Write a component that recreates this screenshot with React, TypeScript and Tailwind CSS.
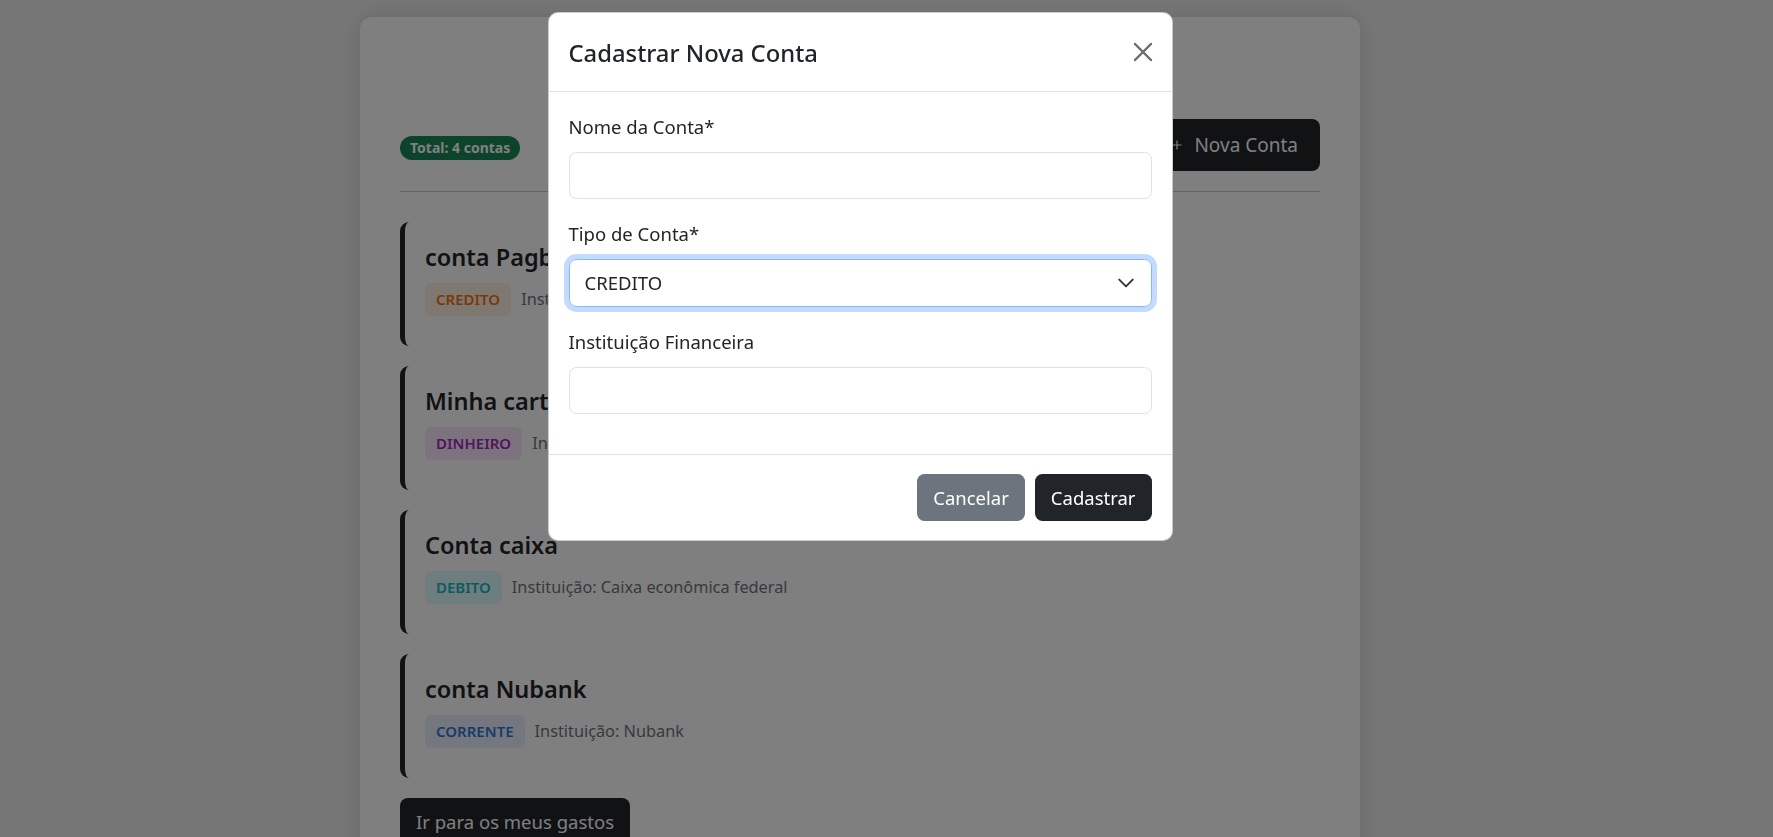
import { Plus } from "lucide-react";

type Conta = {
  nome: string;
  tipo: string;
  instituicao: string;
  badgeClass: string;
};

const contas: Conta[] = [
  {
    nome: "conta Pagbank",
    tipo: "CREDITO",
    instituicao: "Pagbank",
    badgeClass: "bg-[#fff0e2] text-[#f07410]",
  },
  {
    nome: "Minha carteira",
    tipo: "DINHEIRO",
    instituicao: "Carteira",
    badgeClass: "bg-[#fbe6ff] text-[#a02cb8]",
  },
  {
    nome: "Conta caixa",
    tipo: "DEBITO",
    instituicao: "Caixa econômica federal",
    badgeClass: "bg-[#dcfcff] text-[#18b4c0]",
  },
  {
    nome: "conta Nubank",
    tipo: "CORRENTE",
    instituicao: "Nubank",
    badgeClass: "bg-[#e8f0fc] text-[#2e78d8]",
  },
];

const ContaItem = ({ conta }: { conta: Conta }) => (
  <div className="bg-white border-l-[5px] border-[#212529] rounded-[9px] px-5 pt-5 pb-[30px]">
    <h5 className="text-[23.5px] leading-[30px] font-semibold text-[#212529] mb-[11px]">
      {conta.nome}
    </h5>
    <div className="flex items-center gap-2.5">
      <span
        className={`px-[11px] h-[33px] flex items-center rounded-[6px] text-[15px] font-semibold ${conta.badgeClass}`}
      >
        {conta.tipo}
      </span>
      <span className="text-[16.3px] text-[#6c757d]">
        Instituição: {conta.instituicao}
      </span>
    </div>
  </div>
);

const CloseIcon = () => (
  <svg viewBox="0 0 16 16" className="w-5 h-5" fill="none" stroke="currentColor">
    <path d="M1.5 1.5 14.5 14.5M14.5 1.5 1.5 14.5" strokeWidth="1.7" strokeLinecap="round" />
  </svg>
);

const Chevron = () => (
  <svg viewBox="0 0 16 16" className="w-[18px] h-[18px]" fill="none">
    <path
      d="m2 5 6 6 6-6"
      stroke="#343a40"
      strokeWidth="1.8"
      strokeLinecap="round"
      strokeLinejoin="round"
    />
  </svg>
);

export default function App() {
  return (
    <div className="min-h-screen bg-[#ececec] font-['Noto_Sans',sans-serif] text-[18.5px] text-[#212529]">
      {/* Page */}
      <div className="flex justify-center pr-[53px] pt-[17px]">
        <div className="w-[1000px] bg-white rounded-[12px] shadow-[0_0_18px_rgba(0,0,0,0.12)] px-10 pt-10 pb-10">
          <h2 className="text-center text-[37px] leading-[48px] font-medium mb-[14px]">
            Minhas Contas
          </h2>
          <div className="flex items-center justify-between">
            <span className="bg-[#198754] text-white rounded-full h-[24px] px-[10px] mt-[5px] flex items-center text-[14px] font-bold">
              Total: 4 contas
            </span>
            <button className="bg-[#212529] text-white rounded-[8px] h-[52px] pl-5 pr-[22px] flex items-center gap-[10px] text-[19px]">
              <Plus size={14} strokeWidth={2} />
              Nova Conta
            </button>
          </div>
          <hr className="mt-5 mb-[30px] border-t border-[#c8c8c8]" />
          <div className="flex flex-col gap-5">
            {contas.map((c) => (
              <ContaItem key={c.nome} conta={c} />
            ))}
          </div>
          <button className="mt-5 bg-[#212529] text-white rounded-[8px] h-[48px] px-4">
            Ir para os meus gastos
          </button>
        </div>
      </div>

      {/* Backdrop */}
      <div className="fixed inset-0 bg-black/50" />

      {/* Modal */}
      <div className="fixed inset-0 flex justify-center items-start pr-[53px] pt-[12px]">
        <div className="w-[625px] bg-white rounded-[10px] border border-black/20">
          <div className="flex items-center justify-between px-5 py-5 border-b border-[#dee2e6]">
            <h5 className="text-[23.8px] leading-[37.5px] font-medium pt-[2px] -mb-[2px]">
              Cadastrar Nova Conta
            </h5>
            <button className="text-[#6c6c6c] mr-[-1px]">
              <CloseIcon />
            </button>
          </div>
          <div className="px-5 pt-5 pb-5 flex flex-col gap-5">
            <div>
              <label className="block leading-[30px] mb-[10px]">Nome da Conta*</label>
              <div className="h-[47.5px] rounded-[7.5px] border border-[#dee2e6]" />
            </div>
            <div>
              <label className="block leading-[30px] mb-[10px]">Tipo de Conta*</label>
              <div className="h-[47.5px] rounded-[7.5px] border border-[#86b7fe] ring-[5px] ring-[#0d6efd]/25 flex items-center justify-between pl-[15px] pr-[16px]">
                <span>CREDITO</span>
                <Chevron />
              </div>
            </div>
            <div>
              <label className="block leading-[30px] mb-[10px]">Instituição Financeira</label>
              <div className="h-[47.5px] rounded-[7.5px] border border-[#dee2e6]" />
            </div>
            <div className="h-0" />
          </div>
          <div className="flex justify-end gap-2.5 px-5 py-[19px] border-t border-[#dee2e6]">
            <button className="bg-[#6c757d] text-white rounded-[7.5px] h-[47px] px-4">
              Cancelar
            </button>
            <button className="bg-[#212529] text-white rounded-[7.5px] h-[47px] px-4">
              Cadastrar
            </button>
          </div>
        </div>
      </div>
    </div>
  );
}
